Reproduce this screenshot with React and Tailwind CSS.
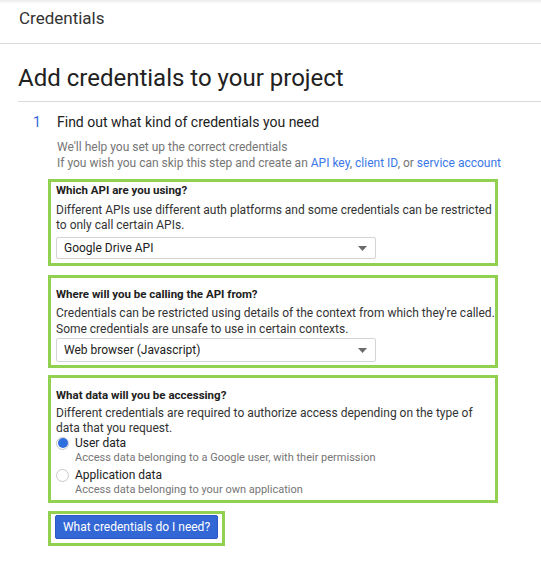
import React from "react";

function Select({ value, h }) {
  return (
    <div
      className={`w-[320px] ${h} border border-[#d4d4d4] rounded-[2px] bg-white flex items-center justify-between pl-[7px] pr-[8px] text-[12px] text-[#212121]`}
    >
      <span>{value}</span>
      <svg width="9" height="5" viewBox="0 0 9 5">
        <path d="M0 0 L9 0 L4.5 5 Z" fill="#6b6b6b" />
      </svg>
    </div>
  );
}

function Radio({ checked, label, sub, className }) {
  return (
    <div className={className}>
      <div className="flex items-center h-[14px]">
        <span className="w-[13px] h-[13px] rounded-full border border-[#c9c9c9] bg-white flex items-center justify-center shrink-0">
          {checked && <span className="w-[10px] h-[10px] rounded-full bg-[#2f6fe0]" />}
        </span>
        <span className="ml-[6px] text-[12px] leading-[14px] text-[#212121]">{label}</span>
      </div>
      <div className="pl-[19px] text-[11px] leading-[15px] text-[#757575]">{sub}</div>
    </div>
  );
}

export default function App() {
  return (
    <div className="w-[541px] h-[563px] bg-white overflow-hidden font-['Roboto',sans-serif]">
      <div className="h-[44px] border-b border-[#dadada] pt-[8px] pl-[19px] text-[17px] leading-[20px] text-[#333333] bg-[linear-gradient(to_bottom,#ececec,#ffffff_4px)]">
        Credentials
      </div>
      <div className="pl-[18px]">
        <h1 className="pt-[18px] pb-[7px] text-[24px] leading-[32px] text-[#212121] border-b border-[#dadada]">
          Add credentials to your project
        </h1>
        <div className="flex mt-[10px]">
          <span className="w-[39px] pl-[15px] text-[14px] leading-[20px] text-[#3367d6]">1</span>
          <div className="flex flex-col">
            <div className="text-[14px] leading-[20px] text-[#212121]">
              Find out what kind of credentials you need
            </div>
            <div className="mt-[7px] text-[12px] leading-[16px] text-[#757575]">
              <div>We'll help you set up the correct credentials</div>
              <div>
                If you wish you can skip this step and create an{" "}
                <span className="text-[#3b78e7]">API key</span>,{" "}
                <span className="text-[#3b78e7]">client ID</span>, or{" "}
                <span className="text-[#3b78e7]">service account</span>
              </div>
            </div>

            <div className="mt-[8px] -ml-[9px] w-[450px] border-[3px] border-[#92d050] pl-[5px] pb-[4px]">
              <div className="text-[11.5px] leading-[16px] font-bold text-[#212121]">Which API are you using?</div>
              <div className="mt-[5px] text-[12px] leading-[15px] text-[#333333]">
                Different APIs use different auth platforms and some credentials can be restricted to only call certain APIs.
              </div>
              <div className="mt-[4px]">
                <Select value="Google Drive API" h="h-[22px]" />
              </div>
            </div>

            <div className="mt-[9px] -ml-[9px] w-[450px] border-[3px] border-[#92d050] pl-[5px] pt-[8px] pb-[3px]">
              <div className="text-[11.5px] leading-[16px] font-bold text-[#212121]">Where will you be calling the API from?</div>
              <div className="mt-[3px] text-[12px] leading-[16px] text-[#333333]">
                Credentials can be restricted using details of the context from which they're called. Some credentials are unsafe to use in certain contexts.
              </div>
              <div className="mt-[1px]">
                <Select value="Web browser (Javascript)" h="h-[24px]" />
              </div>
            </div>

            <div className="mt-[7px] -ml-[9px] w-[450px] border-[3px] border-[#92d050] pl-[5px] pt-[9px] pb-[3px]">
              <div className="text-[11.5px] leading-[16px] font-bold text-[#212121]">What data will you be accessing?</div>
              <div className="mt-[3px] text-[12px] leading-[15px] text-[#333333]">
                Different credentials are required to authorize access depending on the type of data that you request.
              </div>
              <Radio
                checked
                label="User data"
                sub="Access data belonging to a Google user, with their permission"
              />
              <Radio
                className="mt-[3px]"
                label="Application data"
                sub="Access data belonging to your own application"
              />
            </div>

            <div className="mt-[8px] -ml-[9px] w-[177px] border-[3px] border-[#92d050] pl-[4px] pb-[4px]">
              <button className="w-[163px] h-[24px] bg-[#3367d6] border border-[#2a56c6] rounded-[2px] text-white text-[12px] leading-[22px] text-center">
                What credentials do I need?
              </button>
            </div>
          </div>
        </div>
      </div>
    </div>
  );
}
